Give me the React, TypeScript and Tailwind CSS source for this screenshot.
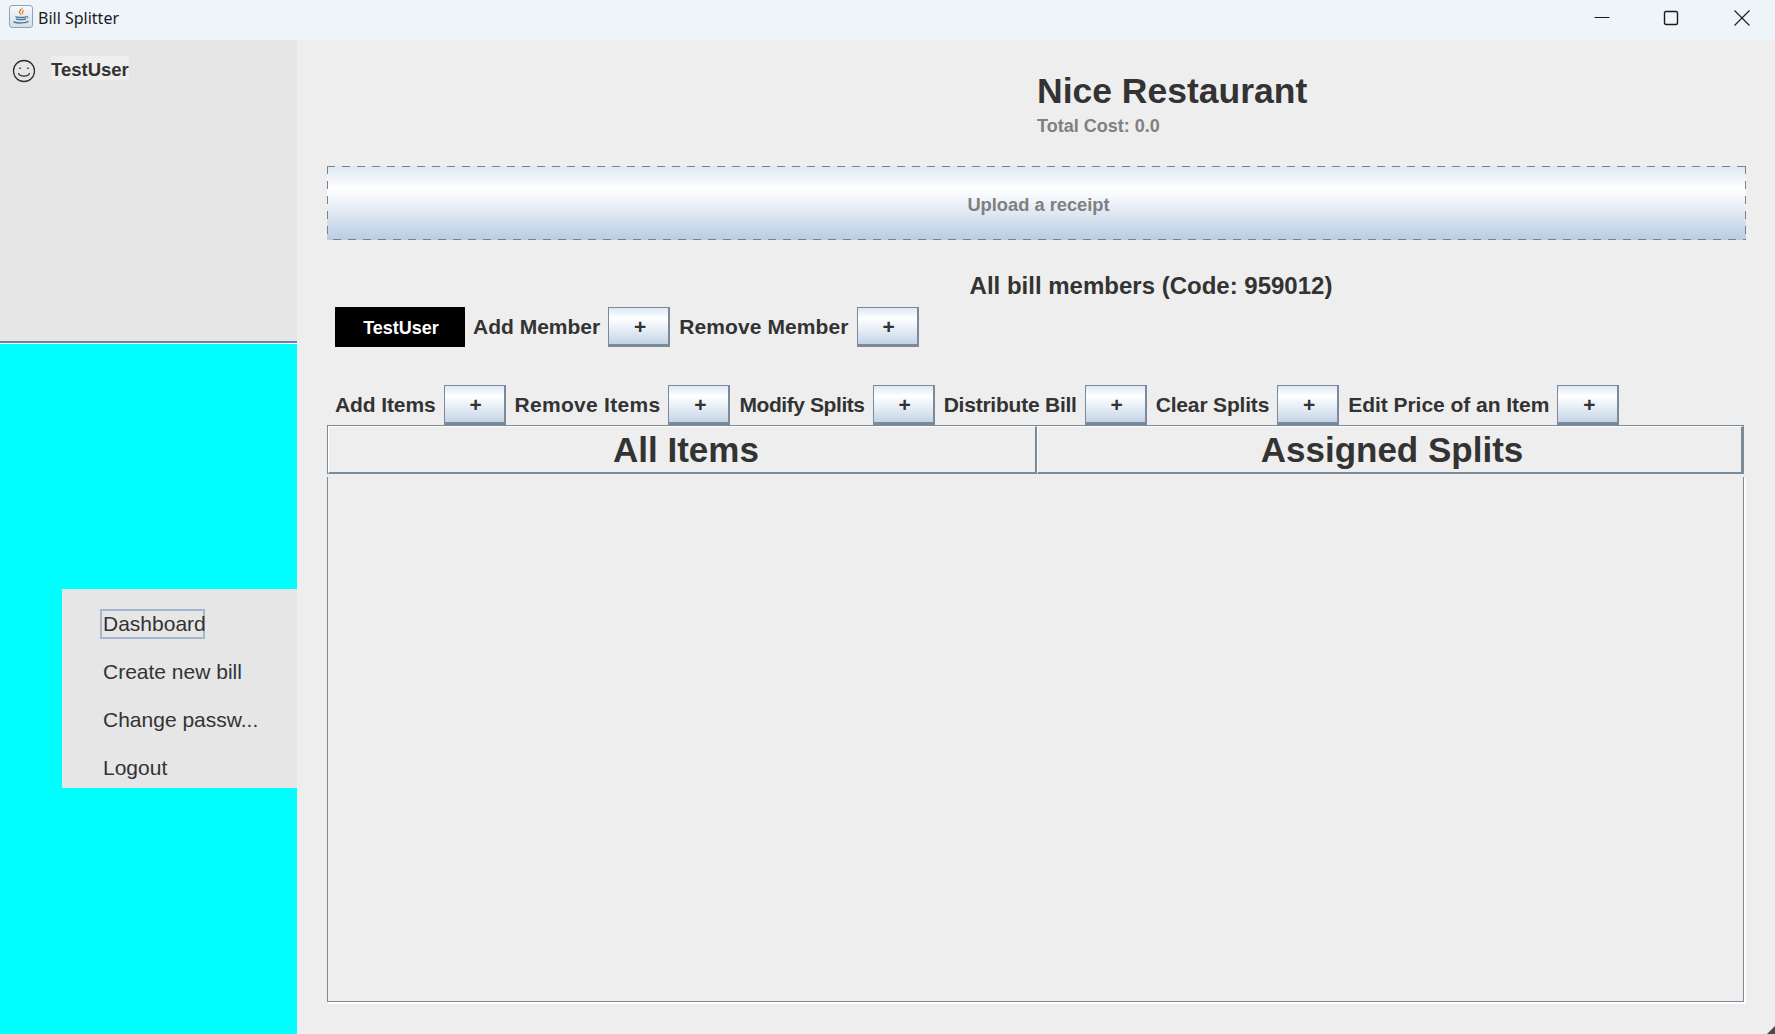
import React from 'react';

const PlusButton: React.FC = () => (
  <button className="w-[62px] h-10 shrink-0 border border-[#7a8a99] border-r-2 border-b-[3px] bg-[linear-gradient(180deg,#dde8f4_0%,#ffffff_28%,#e4ecf5_62%,#c3d4e6_100%)] text-[21px] font-bold text-[#333333] leading-none pl-[3px]">
    +
  </button>
);

const Action: React.FC<{ label: string; className?: string }> = ({ label, className }) => (
  <div className="flex items-center gap-2">
    <span className={`text-[21px] font-bold text-[#333333] whitespace-nowrap ${className ?? ''}`}>{label}</span>
    <PlusButton />
  </div>
);

const JavaIcon: React.FC = () => (
  <div className="w-6 h-[23px] -mt-[4px] rounded-[3px] border border-[#8fa3b5] bg-[linear-gradient(180deg,#f7f9fc,#d3dfea)] flex items-center justify-center">
    <svg width="20" height="20" viewBox="0 0 20 20" fill="none">
      <path d="M11.500 1c1 2.500-3 3.500-2.200 5.800.3 1 1.200 1.500 1.100 2.400-1.200-.9-3.200-2.100-2.300-4.300C8.800 3.300 11.200 2.800 11.500 1z" fill="#e76f00" />
      <path d="M13 4.500c-1.800.9-2.100 2.100-1.200 3.600" stroke="#e76f00" strokeWidth="1.100" />
      <path d="M5 10.800c2.500.7 7.500.7 10 0M5.500 13c2.300.6 6.800.6 9 0M3 16c3.500 1.300 10.500 1.300 14-.4" stroke="#4a7a9c" strokeWidth="1.400" strokeLinecap="round" />
      <path d="M15 10.500c1.800-.6 2.800 1 1 2.200" stroke="#4a7a9c" strokeWidth="1" />
    </svg>
  </div>
);

const Smiley: React.FC = () => (
  <svg width="24" height="24" viewBox="0 0 24 24" fill="none" stroke="#333333" strokeWidth="1.300">
    <circle cx="12" cy="12" r="10.500" />
    <path d="M8 8.500v1.500M16 8.500v1.500" strokeWidth="1.500" />
    <path d="M6.500 14.500c1.500 3.500 9.500 3.500 11 0" strokeLinecap="round" />
  </svg>
);

const TitleBar: React.FC = () => (
  <div className="h-10 shrink-0 bg-[#eff4f9] flex items-center pl-[9px] pb-[4px]">
    <JavaIcon />
    <span className="ml-[5px] text-[16px] text-[#1a1a1a] font-['Noto_Sans',sans-serif]">Bill Splitter</span>
    <div className="ml-auto flex items-center">
      <svg className="mr-[53px]" width="16" height="16" viewBox="0 0 16 16" stroke="#1a1a1a" fill="none">
        <path d="M0.500 7.500h15" />
      </svg>
      <svg className="mr-[55px]" width="16" height="16" viewBox="0 0 16 16" stroke="#1a1a1a" strokeWidth="1.400" fill="none">
        <rect x="1.500" y="1.500" width="13" height="13" rx="1.500" />
      </svg>
      <svg className="mr-[25px]" width="16" height="16" viewBox="0 0 16 16" stroke="#1a1a1a" strokeWidth="1.100" fill="none">
        <path d="M0.500 0.500l15 15M15.500 0.500l-15 15" />
      </svg>
    </div>
  </div>
);

const Sidebar: React.FC = () => (
  <aside className="w-[297px] shrink-0 flex flex-col">
    <div className="h-[301px] bg-[#e6e6e6] flex items-start pl-3 pt-4 gap-[15px]">
      <div className="mt-[3px]">
        <Smiley />
      </div>
      <span className="h-6 bg-[#eeeeee] text-[18.500px] leading-[28px] font-bold text-[#333333]">TestUser</span>
    </div>
    <div className="h-[3px] bg-[#ffffff] border-t-2 border-[#6a82a8] shrink-0" />
    <div className="flex-1 bg-[#00ffff] pt-[245px]">
      <nav className="ml-[62px] h-[199px] bg-[#e6e6e6] flex flex-col pl-[41px] pt-5 gap-[18px] text-[21px] leading-[30px] text-[#333333]">
        <span className="w-[105px] h-[30px] -ml-[3px] pl-[1px] border-2 border-[#a3b8d0] leading-[26px]">Dashboard</span>
        <span>Create new bill</span>
        <span>Change passw...</span>
        <span>Logout</span>
      </nav>
    </div>
  </aside>
);

const TableHeader: React.FC<{ title: string; className: string }> = ({ title, className }) => (
  <div
    className={`flex-1 h-[48px] flex items-center justify-center pt-[2px] border-t border-l border-white border-b-2 border-b-[#7a8a99] text-[35px] font-bold text-[#333333] ${className}`}
  >
    {title}
  </div>
);

const App: React.FC = () => {
  return (
    <div className="relative w-[1775px] h-[1034px] flex flex-col bg-[#eeeeee] overflow-hidden font-['Liberation_Sans',Arial,sans-serif]">
      <TitleBar />
      <div className="flex-1 flex min-h-0">
        <Sidebar />
        <main className="flex-1 flex flex-col pl-[30px] pr-[29px]">
          <div className="pl-[710px] pt-[30px] h-[126px] shrink-0">
            <h1 className="text-[35.500px] leading-[42px] font-bold text-[#333333]">Nice Restaurant</h1>
            <p className="mt-[4px] text-[18px] leading-[20px] font-bold text-[#808080]">Total Cost: 0.0</p>
          </div>
          <div className="h-[74px] shrink-0 flex items-center justify-center pt-[4px] pl-[4px] text-[18.300px] font-bold text-[#808080] [background:repeating-linear-gradient(90deg,#808080_0_8px,transparent_8px_15px)_0_0/100%_1px_no-repeat,repeating-linear-gradient(90deg,#808080_0_8px,transparent_8px_15px)_6px_100%/100%_1px_no-repeat,repeating-linear-gradient(180deg,#808080_0_8px,transparent_8px_15px)_0_0/1px_100%_no-repeat,repeating-linear-gradient(180deg,#808080_0_8px,transparent_8px_15px)_100%_0/1px_100%_no-repeat,linear-gradient(180deg,#dde8f4_0%,#ffffff_30%,#eef2f9_50%,#b8cde2_100%)]">
            Upload a receipt
          </div>
          <div className="mt-[32px] h-[28px] shrink-0 text-center pl-[229px] text-[24px] leading-[28px] font-bold text-[#333333]">
            All bill members (Code: 959012)
          </div>
          <div className="mt-[7px] pl-[8px] flex items-center gap-2 shrink-0">
            <div className="w-[130px] h-10 pt-[2px] pl-[2px] bg-black text-white text-[18px] font-bold flex items-center justify-center">
              TestUser
            </div>
            <Action label="Add Member" />
            <Action label="Remove Member" className="ml-[1px] tracking-[0.1px]" />
          </div>
          <div className="mt-[38px] pl-[8px] flex items-center gap-2 shrink-0">
            <Action label="Add Items" className="tracking-[-0.11px]" />
            <Action label="Remove Items" className="ml-[1px] tracking-[0.29px]" />
            <Action label="Modify Splits" className="ml-[1px] tracking-[-0.42px]" />
            <Action label="Distribute Bill" className="ml-[1px] tracking-[-0.23px]" />
            <Action label="Clear Splits" className="ml-[1px] tracking-[-0.17px]" />
            <Action label="Edit Price of an Item" className="ml-[1px] tracking-[-0.04px]" />
          </div>
          <div className="w-[1417px] shrink-0 flex border-t border-l border-[#7a8a99]">
            <TableHeader title="All Items" className="pl-[8px] border-r-2 border-r-[#7a8a99]" />
            <TableHeader title="Assigned Splits" className="pl-[5px] border-r-[3px] border-r-[#7a8a99]" />
          </div>
          <div className="w-[1417px] h-[525px] mt-[3px] shrink-0 border-l border-r border-b border-[#7a8a99] shadow-[1px_1px_0_#ffffff,2px_2px_0_#ffffff]" />
        </main>
      </div>
      <svg className="absolute right-0 bottom-0" width="8" height="8" viewBox="0 0 8 8">
        <path d="M8 0v8H0z" fill="#4a4a4a" />
      </svg>
    </div>
  );
};

export default App;
